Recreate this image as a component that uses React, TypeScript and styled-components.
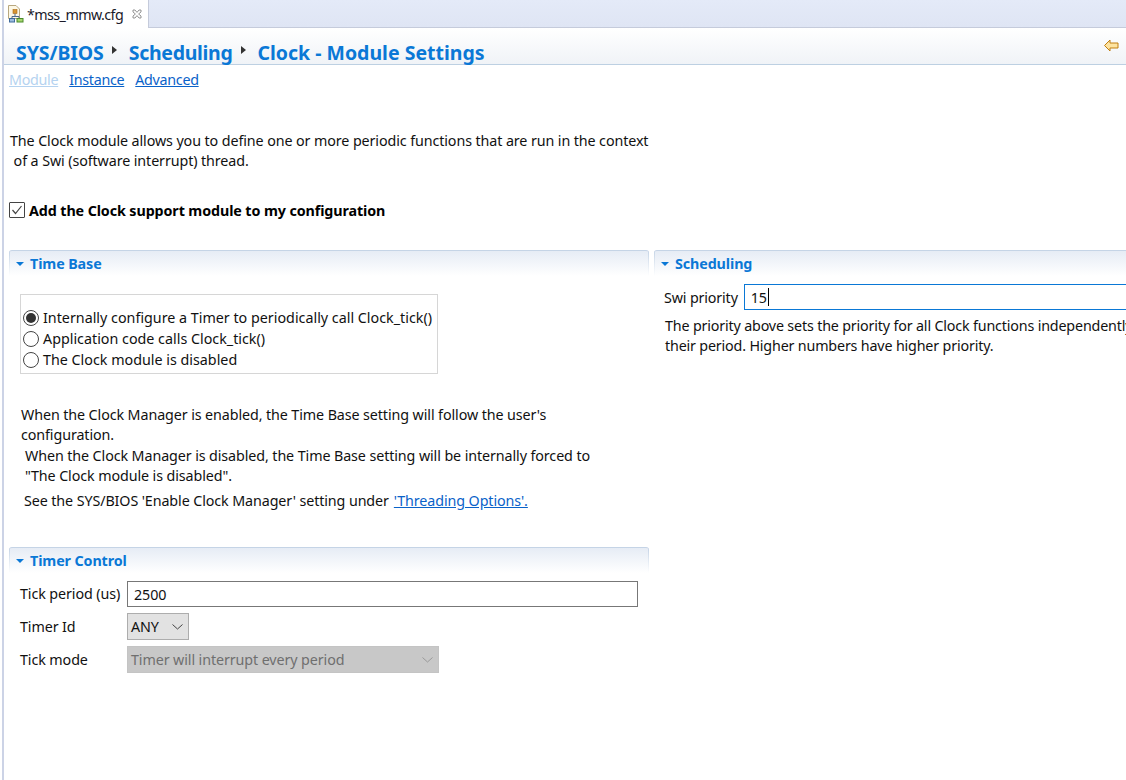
import * as React from "react";
import styled, { createGlobalStyle } from "styled-components";

const GlobalStyle = createGlobalStyle`
	html, body {
		margin: 0;
		padding: 0;
		background: #fff;
		overflow: hidden;
	}
	body {
		font-family: "Noto Sans", "Open Sans", sans-serif;
		font-size: 14.3px;
		letter-spacing: -0.1px;
		color: #111;
	}
`;

const Page = styled.div`
	width: 1126px;
	height: 780px;
	overflow: hidden;
	display: flex;
	flex-direction: column;
	box-sizing: border-box;
	margin-left: 2px;
	border-left: 2px solid #ccd3e6;
`;

const TabBar = styled.div`
	height: 27px;
	flex: none;
	display: flex;
	background: linear-gradient(#e4eaf8, #dfe5f4);
	border-bottom: 1px solid #c5cbdb;
`;

const Tab = styled.div`
	width: 145px;
	height: 28px;
	box-sizing: border-box;
	background: #fff;
	border-right: 1px solid #c5cbdb;
	display: flex;
	align-items: center;
	padding-left: 4px;
	gap: 3px;
	font-size: 14.3px;
	letter-spacing: -0.58px;
	color: #1a1a2a;
`;

const CloseIcon = styled.svg`
	margin-left: 6px;
	flex: none;
`;

const FormHeader = styled.div`
	height: 37px;
	flex: none;
	box-sizing: border-box;
	border-bottom: 1px solid #bdd0e2;
	background: linear-gradient(#fff, #f0f3f7);
	display: flex;
	align-items: flex-end;
	padding-left: 12px;
	padding-right: 9px;
	position: relative;
`;

const Crumb = styled.span<{ $spacing: number }>`
	color: #0a78d6;
	font-size: 19.5px;
	font-weight: 700;
	line-height: 24px;
	margin-bottom: -1px;
	letter-spacing: ${(p) => p.$spacing}px;
`;

const CrumbArrow = styled.span<{ $left: number; $gap: number }>`
	width: 0;
	height: 0;
	border-left: 5px solid #333;
	border-top: 4px solid transparent;
	border-bottom: 4px solid transparent;
	margin: 0 ${(p) => p.$gap}px 10px ${(p) => p.$left}px;
`;

const BackIcon = styled.svg`
	position: absolute;
	right: 9px;
	top: 11px;
`;

const LinkRow = styled.div`
	display: flex;
	gap: 11px;
	padding: 4px 0 0 5px;
	height: 22px;
	letter-spacing: -0.3px;
`;

const PageLink = styled.a<{ $muted?: boolean }>`
	color: ${(p) => (p.$muted ? "#b5d3f0" : "#0a62c9")};
	text-decoration: underline;
	line-height: 21px;
`;

const Description = styled.p`
	margin: 40px 0 0 6px;
	width: 680px;
	line-height: 20px;
`;

const CheckRow = styled.label`
	display: flex;
	align-items: center;
	gap: 4px;
	margin: 28px 0 0 5px;
	height: 22px;
	font-weight: 700;
	color: #000;
`;

const CheckBox = styled.span`
	width: 14px;
	height: 14px;
	border: 1px solid #444;
	border-radius: 1px;
	display: flex;
	align-items: center;
	justify-content: center;
`;

const Columns = styled.div`
	display: flex;
	gap: 5px;
	margin: 29px 0 0 5px;
`;

const LeftColumn = styled.div`
	width: 640px;
	flex: none;
`;

const RightColumn = styled.div`
	flex: 1;
	min-width: 480px;
`;

const Section = styled.section<{ $top?: number }>`
	margin-top: ${(p) => p.$top ?? 0}px;
`;

const SectionHead = styled.div`
	height: 26px;
	box-sizing: border-box;
	border-top: 1px solid #c5d4e6;
	border-radius: 3px 3px 0 0;
	background:
		linear-gradient(#c5d4e6, #fff) left top / 1px 100% no-repeat,
		linear-gradient(#c5d4e6, #fff) right top / 1px 100% no-repeat,
		linear-gradient(#e6ecf5, #fff);
	display: flex;
	align-items: center;
	padding-left: 7px;
	gap: 6px;
	color: #0a78d6;
	font-weight: 700;
`;

const Twisty = styled.span`
	width: 0;
	height: 0;
	border-top: 4px solid #0a78d6;
	border-left: 4px solid transparent;
	border-right: 4px solid transparent;
`;

const RadioGroup = styled.div`
	width: 418px;
	height: 80px;
	box-sizing: border-box;
	margin: 18px 0 0 11px;
	border: 1px solid #d6d6d6;
	padding-top: 12px;
`;

const RadioRow = styled.div`
	display: flex;
	align-items: center;
	gap: 4px;
	height: 21px;
	padding-left: 2px;
	letter-spacing: 0;
`;

const RadioDot = styled.span<{ $on?: boolean }>`
	width: 14px;
	height: 14px;
	border: 1px solid #444;
	border-radius: 50%;
	display: flex;
	align-items: center;
	justify-content: center;
	&::after {
		content: "";
		display: ${(p) => (p.$on ? "block" : "none")};
		width: 10px;
		height: 10px;
		border-radius: 50%;
		background: #333;
	}
`;

const Note = styled.div<{ $left: number; $top?: number }>`
	margin-left: ${(p) => p.$left}px;
	margin-top: ${(p) => p.$top ?? 0}px;
	line-height: 20px;
`;

const NoteBlock = styled.div`
	margin-top: 31px;
`;

const SeeLine = styled(Note)`
	line-height: 22px;
`;

const InlineLink = styled.a`
	color: #0a62c9;
	text-decoration: underline;
	margin-left: 5px;
`;

const FieldGrid = styled.div`
	display: grid;
	grid-template-columns: 107px 1fr;
	row-gap: 6px;
	align-items: center;
	padding: 8px 11px 0 11px;
`;

const FieldLabel = styled.span`
	line-height: 20px;
`;

const TextBox = styled.div<{ $focus?: boolean; $inset: number }>`
	height: 26px;
	box-sizing: border-box;
	border: 1px solid ${(p) => (p.$focus ? "#0a78d6" : "#777")};
	padding-left: ${(p) => p.$inset}px;
	display: flex;
	align-items: center;
	background: #fff;
	flex: 1;
`;

const Caret = styled.span`
	width: 1px;
	height: 18px;
	background: #000;
	margin-left: 1px;
`;

const Select = styled.div<{ $disabled?: boolean; $width: number }>`
	width: ${(p) => p.$width}px;
	height: 27px;
	box-sizing: border-box;
	border: 1px solid ${(p) => (p.$disabled ? "#c4c4c4" : "#adadad")};
	background: ${(p) => (p.$disabled ? "#c8c8c8" : "#e2e2e2")};
	color: ${(p) => (p.$disabled ? "#6f6f6f" : "#111")};
	display: flex;
	align-items: center;
	justify-content: space-between;
	padding: 0 5px 0 3px;
`;

const SwiRow = styled.div`
	display: flex;
	align-items: center;
	gap: 6px;
	padding: 8px 0 0 10px;
	letter-spacing: -0.15px;
`;

const SwiNote = styled.div`
	margin: 6px 0 0 11px;
	width: 480px;
	white-space: nowrap;
	line-height: 20px;
	letter-spacing: -0.17px;
`;

const Chevron = ({ color }: { color: string }) => (
	<svg width="11" height="6" viewBox="0 0 11 6">
		<path d="M0.5 0.5 L5.5 5 L10.5 0.5" fill="none" stroke={color} strokeWidth="1" />
	</svg>
);

const App = () => {
	return (
		<>
			<GlobalStyle />
			<Page>
				<TabBar>
					<Tab>
						<svg width="16" height="18" viewBox="0 0 16 18">
							<path d="M0.5 0.5 H8 L11.5 4 V13.5 H0.5 Z" fill="#fdf8e6" stroke="#b8a880" />
							<rect x="5" y="4.5" width="4" height="4" fill="#d8952f" stroke="#a86a18" strokeWidth="0.6" />
							<path d="M7 8.5 V11.5 M4 11.5 H11 V13 M4 11.5 V13" stroke="#4d6a8c" fill="none" />
							<rect x="1.5" y="13.5" width="5" height="3.5" fill="#9cbde0" stroke="#3f6a9a" />
							<rect x="9" y="13.5" width="6" height="3.5" fill="#a5d66f" stroke="#4b8a2a" />
						</svg>
						*mss_mmw.cfg
						<CloseIcon width="10" height="10" viewBox="0 0 10 10">
							<path d="M1 1 L3 1 L5 3.4 L7 1 L9 1 L9 3 L6.6 5 L9 7 L9 9 L7 9 L5 6.6 L3 9 L1 9 L1 7 L3.4 5 L1 3 Z" fill="#fff" stroke="#888" strokeWidth="0.9" />
						</CloseIcon>
					</Tab>
				</TabBar>
				<FormHeader>
					<Crumb $spacing={-0.1}>SYS/BIOS</Crumb>
					<CrumbArrow $left={8} $gap={12} />
					<Crumb $spacing={-0.3}>Scheduling</Crumb>
					<CrumbArrow $left={9} $gap={11} />
					<Crumb $spacing={0}>Clock - Module Settings</Crumb>
					<BackIcon width="15" height="13" viewBox="0 0 15 13">
						<path d="M0.5 6.5 L6 1 V4 H14 V9 H6 V12 Z" fill="#fde3a0" stroke="#c07f10" />
					</BackIcon>
				</FormHeader>
				<LinkRow>
					<PageLink $muted>Module</PageLink>
					<PageLink>Instance</PageLink>
					<PageLink>Advanced</PageLink>
				</LinkRow>
				<Description>
					The Clock module allows you to define one or more periodic functions that are run in the context
					<br />
					&nbsp;of a Swi (software interrupt) thread.
				</Description>
				<CheckRow>
					<CheckBox>
						<svg width="12" height="10" viewBox="0 0 12 10">
							<path d="M1.5 5 L4.5 8.5 L10.5 1" fill="none" stroke="#444" strokeWidth="1.2" />
						</svg>
					</CheckBox>
					Add the Clock support module to my configuration
				</CheckRow>
				<Columns>
					<LeftColumn>
						<Section>
							<SectionHead>
								<Twisty />
								Time Base
							</SectionHead>
							<RadioGroup>
								<RadioRow>
									<RadioDot $on />
									Internally configure a Timer to periodically call Clock_tick()
								</RadioRow>
								<RadioRow>
									<RadioDot />
									Application code calls Clock_tick()
								</RadioRow>
								<RadioRow>
									<RadioDot />
									The Clock module is disabled
								</RadioRow>
							</RadioGroup>
							<NoteBlock>
								<Note $left={12}>
									When the Clock Manager is enabled, the Time Base setting will follow the user's
									<br />
									configuration.
								</Note>
								<Note $left={16} $top={1}>
									When the Clock Manager is disabled, the Time Base setting will be internally forced to
									<br />
									"The Clock module is disabled".
								</Note>
								<SeeLine $left={15} $top={4}>
									See the SYS/BIOS 'Enable Clock Manager' setting under
									<InlineLink>'Threading Options'.</InlineLink>
								</SeeLine>
							</NoteBlock>
						</Section>
						<Section $top={35}>
							<SectionHead>
								<Twisty />
								Timer Control
							</SectionHead>
							<FieldGrid>
								<FieldLabel>Tick period (us)</FieldLabel>
								<TextBox $inset={6}>2500</TextBox>
								<FieldLabel>Timer Id</FieldLabel>
								<Select $width={62}>
									ANY
									<Chevron color="#444" />
								</Select>
								<FieldLabel>Tick mode</FieldLabel>
								<Select $width={312} $disabled>
									Timer will interrupt every period
									<Chevron color="#999" />
								</Select>
							</FieldGrid>
						</Section>
					</LeftColumn>
					<RightColumn>
						<Section>
							<SectionHead>
								<Twisty />
								Scheduling
							</SectionHead>
							<SwiRow>
								Swi priority
								<TextBox $focus $inset={6}>
									15
									<Caret />
								</TextBox>
							</SwiRow>
							<SwiNote>
								The priority above sets the priority for all Clock functions independently of
								<br />
								their period. Higher numbers have higher priority.
							</SwiNote>
						</Section>
					</RightColumn>
				</Columns>
			</Page>
		</>
	);
};

export default App;
